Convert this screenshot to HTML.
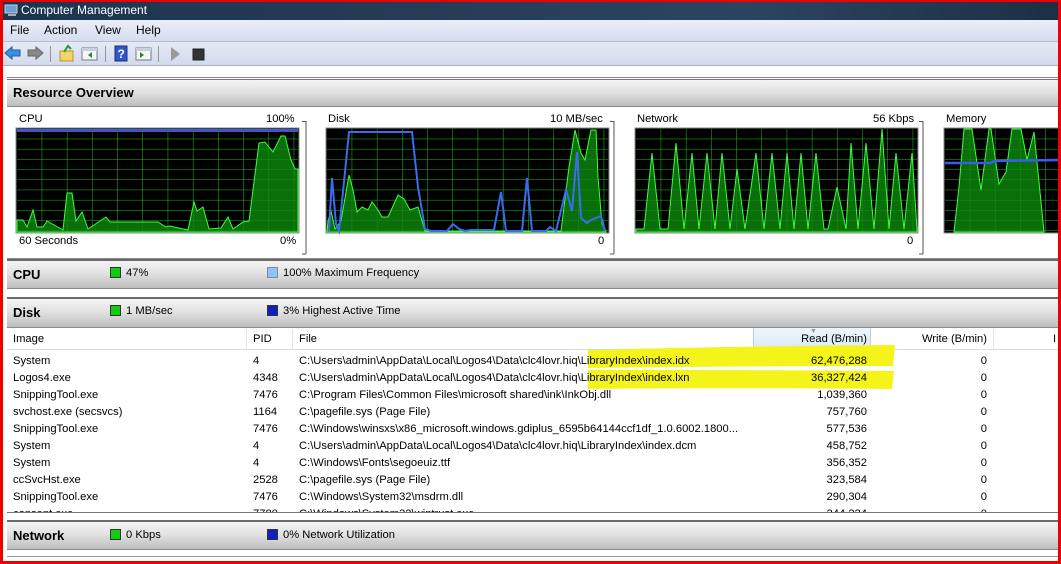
<!DOCTYPE html>
<html><head><meta charset="utf-8"><style>
*{margin:0;padding:0;box-sizing:border-box}
body{width:1061px;height:564px;overflow:hidden;background:#fff;font-family:"Liberation Sans",sans-serif;font-size:11.2px;color:#000;position:relative}
.a{position:absolute;white-space:nowrap}
.title{left:0;top:0;width:1061px;height:20px;background:linear-gradient(90deg,#1c3550 0%,#253c55 40%,#2b4560 70%,#1d2f45 100%);border-top:2px solid #e00;color:#fff;font-size:12px;line-height:17px;padding-left:21px}
.menu{left:0;top:20px;width:1061px;height:22px;background:linear-gradient(#e9eef8,#d6ddef);border-bottom:1px solid #b6bccc;font-size:12px;line-height:21px}
.tool{left:0;top:42px;width:1061px;height:24px;background:linear-gradient(#e5eaf5,#d3daec);border-bottom:1px solid #a8aebb}
.hdr{left:7px;width:1051px;background:linear-gradient(#f4f4f4,#e2e2e2 45%,#bdbdbd);border-top:2px solid #6b6b6b;border-bottom:1px solid #8a8a8a;font-weight:bold;font-size:13px;padding-left:6px}
.sw{display:inline-block;width:11px;height:11px;vertical-align:-2px;margin-right:5px;border:1px solid #333}
.td{position:absolute;font-size:11.2px}
</style></head><body>
<div style="position:absolute;left:0;top:0;width:3px;height:564px;background:#e00;z-index:9"></div>
<div style="position:absolute;right:0;top:0;width:3px;height:564px;background:#e00;z-index:9"></div>
<div style="position:absolute;left:0;bottom:0;width:1061px;height:3px;background:#e00;z-index:9"></div>
<div class="a title"><svg style="position:absolute;left:4px;top:2px" width="14" height="13"><rect x="1" y="1" width="12" height="8" fill="#6aa0d8" stroke="#ccc"/><rect x="4" y="10" width="8" height="2" fill="#aaa"/></svg>Computer Management</div>
<div class="a menu"><span style="position:absolute;left:10px">File</span><span style="position:absolute;left:44px">Action</span><span style="position:absolute;left:95px">View</span><span style="position:absolute;left:136px">Help</span></div>
<div class="a tool">
<svg width="220" height="24">
<path d="M5 11 L12 5 L12 8 L20 8 L20 14 L12 14 L12 17 Z" fill="#3b8ee0" stroke="#1a5fa8"/>
<path d="M43 11 L36 5 L36 8 L28 8 L28 14 L36 14 L36 17 Z" fill="#8a8a8a" stroke="#666"/>
<line x1="50.5" y1="4" x2="50.5" y2="20" stroke="#999"/>
<rect x="60" y="9" width="13" height="10" fill="#f2d46a" stroke="#b89530"/><path d="M64 10 L68 4 L71 7" stroke="#2a9a2a" stroke-width="2" fill="none"/>
<rect x="82" y="6" width="15" height="12" fill="#f4f6f8" stroke="#778"/><rect x="82" y="6" width="15" height="3" fill="#c8d0dc"/><path d="M92 10 L88 13 L92 16Z" fill="#2a8a2a"/>
<line x1="105.5" y1="4" x2="105.5" y2="20" stroke="#999"/>
<rect x="115" y="4" width="12" height="15" fill="#2f55c8" stroke="#1a2f80"/><text x="117.5" y="16" fill="#fff" font-size="12" font-weight="bold" font-family="Liberation Sans">?</text>
<rect x="136" y="6" width="15" height="12" fill="#f4f6f8" stroke="#778"/><rect x="136" y="6" width="15" height="3" fill="#c8d0dc"/><path d="M140 10 L144 13 L140 16Z" fill="#2a8a2a"/>
<line x1="158.5" y1="4" x2="158.5" y2="20" stroke="#999"/>
<path d="M171 5 L180 12 L171 19Z" fill="#9a9a9a"/>
<rect x="193" y="7" width="11" height="11" fill="#333" stroke="#222"/>
</svg></div>
<div class="a" style="left:7px;top:77px;width:1051px;height:1px;background:#888"></div>
<div class="a hdr" style="top:79px;height:28px;line-height:25px;border-top:1px solid #777">Resource Overview</div>

<div class="a" style="left:19px;top:113px">CPU</div><div class="a" style="left:266px;top:113px">100%</div>
<div class="a" style="left:19px;top:235px">60 Seconds</div><div class="a" style="left:280px;top:235px">0%</div>
<div class="a" style="left:328px;top:113px">Disk</div><div class="a" style="left:550px;top:113px">10 MB/sec</div>
<div class="a" style="left:598px;top:235px">0</div>
<div class="a" style="left:637px;top:113px">Network</div><div class="a" style="left:873px;top:113px">56 Kbps</div>
<div class="a" style="left:907px;top:235px">0</div>
<div class="a" style="left:946px;top:113px">Memory</div>
<svg class="a" style="left:0;top:100px" width="1061" height="160">
<defs>
<pattern id="g" x="0" y="0" width="25.2" height="10.2" patternUnits="userSpaceOnUse"><path d="M25.2 0 V10.2 M0 10.2 H25.2" stroke="#1fbf1f" stroke-width="1"/></pattern>
</defs>
<g stroke="#555" fill="none"><path d="M302 21.5 H306 V154 M302 154 H306"/><path d="M610 21.5 H614 V154 M610 154 H614"/><path d="M919 21.5 H923 V154 M919 154 H923"/></g>
<line x1="7" y1="158.5" x2="1058" y2="158.5" stroke="#888"/>
<g transform="translate(17,29)">
<rect x="-1" y="-1" width="283" height="105" fill="#000" stroke="#888"/>
<rect width="281" height="103" fill="url(#g)"/>
<polygon points="0,103 0,91 6,91 10,98 16,81 20,98 26,98 30,92 46,101 50,64 55,64 59,92 65,83 71,100 89,88 93,93 113,93 127,93 141,93 149,98 153,97 157,98 171,101 177,73 180,82 186,78 192,100 204,99 211,88 216,100 226,93 232,92 242,14 248,13 256,23 264,7 268,7 274,31 278,40 281,40 281,103" fill="#0c8a0c" fill-opacity=".8" stroke="#3dff3d" stroke-width="1"/>
<rect x="0" y="0" width="281" height="3" fill="#4455cc"/>
</g>
<g transform="translate(327,29)">
<rect x="-1" y="-1" width="283" height="105" fill="#000" stroke="#888"/>
<rect width="281" height="103" fill="url(#g)"/>
<polygon points="0,103 1,92 4,82 8,100 14,92 22,46 26,61 30,83 35,78 41,81 45,73 51,81 55,88 61,88 71,66 77,70 83,81 91,78 98,102 234,102 242,38 248,1 254,24 258,31 264,1 269,1 271,48 275,95 279,102 279,103" fill="#0c8a0c" fill-opacity=".8" stroke="#3dff3d"/>
<polyline points="2,102 5,49 9,95 12,102 18,43 22,3 85,3 91,58 98,100 104,102 120,102 126,95 132,100 138,102 144,101 167,101 174,63 179,102 195,102 200,49 205,102 219,102 223,98 229,102 239,61 245,82 250,23 254,89 260,94 264,91 274,87 278,102" fill="none" stroke="#3a6cf0" stroke-width="2"/>
</g>
<g transform="translate(636,29)">
<rect x="-1" y="-1" width="283" height="105" fill="#000" stroke="#888"/>
<rect width="281" height="103" fill="url(#g)"/>
<polygon points="0,103 0,100 8,100 16,24 24,100 30,100 32,100 40,14 48,100 56,24 63,100 71,24 79,100 86,24 94,100 101,40 109,100 120,24 128,100 136,24 144,100 151,24 158,100 165,24 172,100 180,24 188,100 192,100 201,58 210,100 215,14 222,100 230,14 238,100 246,0 253,100 260,24 268,100 276,24 281,100 281,103" fill="#0c8a0c" fill-opacity=".8" stroke="#3dff3d"/>
</g>
<g transform="translate(945,29)">
<rect x="-1" y="-1" width="115" height="105" fill="#000" stroke="#888"/>
<rect width="113" height="103" fill="url(#g)"/>
<polygon points="9,103 14,58 19,0 27,0 36,61 44,0 46,0 54,55 61,43 67,0 76,0 82,31 89,3 99,103" fill="#0c8a0c" fill-opacity=".8" stroke="#3dff3d"/>
<path d="M0 34 L45 34 L50 32 L113 31" stroke="#3a5ce8" stroke-width="2.5" fill="none"/>
</g>
</svg>

<div class="a hdr" style="top:259px;height:30px;line-height:27px">CPU</div>
<div class="a" style="left:110px;top:267px"><span class="sw" style="background:#1c1;"></span>47%</div>
<div class="a" style="left:267px;top:267px"><span class="sw" style="background:#8cc4ff;border-color:#889"></span>100% Maximum Frequency</div>

<div class="a hdr" style="top:297px;height:31px;line-height:28px">Disk</div>
<div class="a" style="left:110px;top:305px"><span class="sw" style="background:#1c1;"></span>1 MB/sec</div>
<div class="a" style="left:267px;top:305px"><span class="sw" style="background:#1020c0;"></span>3% Highest Active Time</div>

<div class="a" style="left:7px;top:328px;width:1051px;height:22px;background:#fff;border-bottom:1px solid #d8dbe0"></div>
<div class="a" style="left:753px;top:328px;width:118px;height:22px;background:linear-gradient(#eef6fc,#d9ebf7);border-left:1px solid #bcd;border-right:1px solid #bcd"></div>
<div class="a" style="left:246px;top:329px;width:1px;height:20px;background:#e4e4e4"></div>
<div class="a" style="left:292px;top:329px;width:1px;height:20px;background:#e4e4e4"></div>
<div class="a" style="left:993px;top:329px;width:1px;height:20px;background:#e4e4e4"></div>
<div class="a" style="left:810px;top:328px;font-size:7px;color:#89a">▼</div>
<div class="a" style="left:13px;top:333px">Image</div>
<div class="a" style="left:253px;top:333px">PID</div>
<div class="a" style="left:299px;top:333px">File</div>
<div class="a" style="left:760px;top:333px;width:107px;text-align:right">Read (B/min)</div>
<div class="a" style="left:880px;top:333px;width:107px;text-align:right">Write (B/min)</div>
<div class="a" style="left:1053px;top:333px">I</div>

<svg class="a" style="left:580px;top:340px" width="330" height="56">
<path d="M8 10 C80 8 200 6 315 5 L313 26 C200 26 80 27 8 28Z" fill="#f4f41a"/>
<path d="M8 30 C80 30 200 30 314 31 L312 49 C200 48 80 48 8 49Z" fill="#f4f41a"/>
</svg>

<div class="a" style="left:7px;top:350px;width:1051px;height:162px;overflow:hidden">
<div class="td" style="left:6px;top:3px;line-height:17px">System<br>Logos4.exe<br>SnippingTool.exe<br>svchost.exe (secsvcs)<br>SnippingTool.exe<br>System<br>System<br>ccSvcHst.exe<br>SnippingTool.exe<br>consent.exe</div>
<div class="td" style="left:246px;top:3px;line-height:17px">4<br>4348<br>7476<br>1164<br>7476<br>4<br>4<br>2528<br>7476<br>7780</div>
<div class="td" style="left:292px;top:3px;line-height:17px">C:\Users\admin\AppData\Local\Logos4\Data\clc4lovr.hiq\LibraryIndex\index.idx<br>C:\Users\admin\AppData\Local\Logos4\Data\clc4lovr.hiq\LibraryIndex\index.lxn<br>C:\Program Files\Common Files\microsoft shared\ink\InkObj.dll<br>C:\pagefile.sys (Page File)<br>C:\Windows\winsxs\x86_microsoft.windows.gdiplus_6595b64144ccf1df_1.0.6002.1800...<br>C:\Users\admin\AppData\Local\Logos4\Data\clc4lovr.hiq\LibraryIndex\index.dcm<br>C:\Windows\Fonts\segoeuiz.ttf<br>C:\pagefile.sys (Page File)<br>C:\Windows\System32\msdrm.dll<br>C:\Windows\System32\wintrust.exe</div>
<div class="td" style="left:753px;width:107px;text-align:right;top:3px;line-height:17px">62,476,288<br>36,327,424<br>1,039,360<br>757,760<br>577,536<br>458,752<br>356,352<br>323,584<br>290,304<br>244,224</div>
<div class="td" style="left:873px;width:107px;text-align:right;top:3px;line-height:17px">0<br>0<br>0<br>0<br>0<br>0<br>0<br>0<br>0<br>0</div>
</div>
<div class="a" style="left:7px;top:512px;width:1051px;height:1px;background:#777"></div>

<div class="a hdr" style="top:520px;height:30px;line-height:28px">Network</div>
<div class="a" style="left:110px;top:529px"><span class="sw" style="background:#1c1;"></span>0 Kbps</div>
<div class="a" style="left:267px;top:529px"><span class="sw" style="background:#1020c0;"></span>0% Network Utilization</div>
<div class="a" style="left:7px;top:556px;width:1051px;height:1px;background:#999"></div>
</body></html>
